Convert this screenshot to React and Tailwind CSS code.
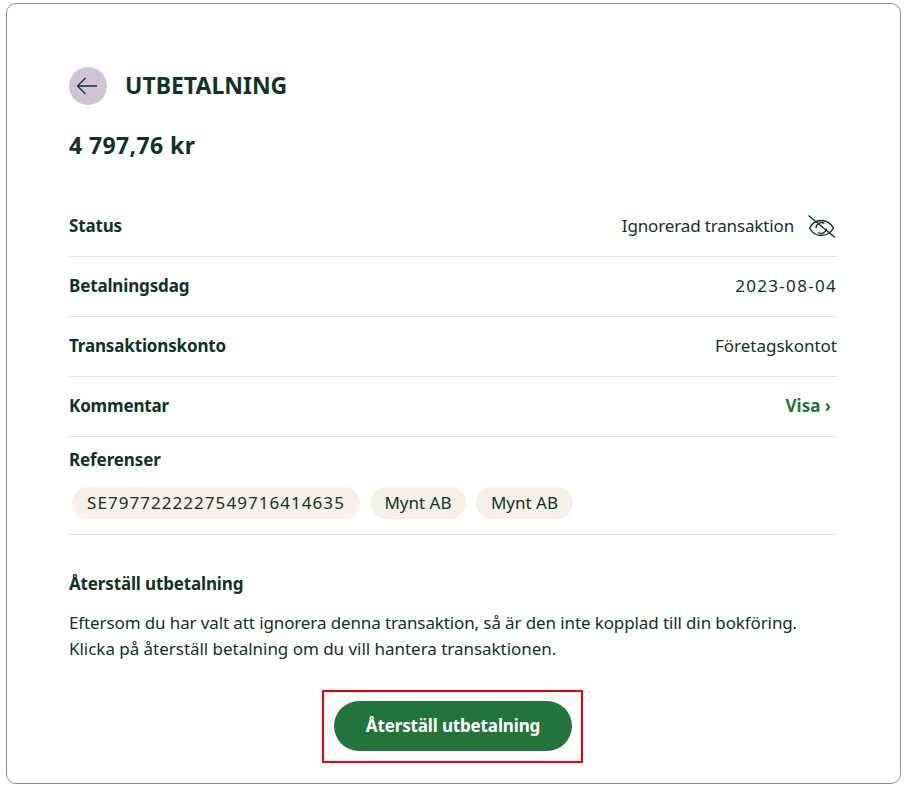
import React from "react";

const Row = ({ label, children }) => (
  <div className="flex h-[60px] items-center justify-between border-b border-[#e2e2e2] pb-[2px]">
    <span className="text-[17px] font-bold tracking-[-0.15px]">{label}</span>
    <div className="flex items-center text-[17px]">{children}</div>
  </div>
);

const Chip = ({ children, className = "" }) => (
  <span className={`flex h-8 items-center rounded-2xl bg-[#f6f0e9] text-[17px] ${className}`}>{children}</span>
);

export default function App() {
  return (
    <div className="h-[789px] bg-white pt-[3px] pl-[6px] font-['Noto_Sans',sans-serif] text-[#0f3327]">
      <div className="h-[781px] w-[895px] rounded-[10px] border border-[#8f8f8f] pr-[63px] pl-[62px] pt-[63px]">
        <div className="flex items-center gap-[18px]">
          <div className="flex h-[38px] w-[38px] items-center justify-center rounded-full bg-[#cfc3d5]">
            <svg className="-mt-px -ml-[3px]" width="24" height="24" viewBox="0 0 24 24" fill="none" stroke="#0f3327" strokeWidth="1.3">
              <path d="M22 12H2.500M10.500 4 2.500 12l8 8" />
            </svg>
          </div>
          <h1 className="mb-[2px] text-[23px] leading-[36px] font-bold">UTBETALNING</h1>
        </div>
        <div className="mt-[23px] text-[23px] leading-[34px] font-bold tracking-[0.4px]">4 797,76 kr</div>
        <div className="mt-[35px]">
          <Row label="Status">
            <span className="tracking-[-0.15px]">Ignorerad transaktion</span>
            <svg className="mt-[2px] mr-px ml-[14px]" width="28" height="26" viewBox="0 0 28 26" fill="none" stroke="#0f3327" strokeWidth="1.4">
              <path d="M1.500 14c2.500-4.500 6.500-7.500 11.500-7.500S23 9.500 25.500 14c-2.500 4.500-6.500 7.500-12.500 7.500S4 18.500 1.500 14Z" />
              <path d="M8 14a5.500 5.500 0 0 1 8.500-4.500M18.500 14.500a5.500 5.500 0 0 1-8.500 4" />
              <path d="M0.500 1.500 27 23.500" />
            </svg>
          </Row>
          <Row label="Betalningsdag">
            <span className="tracking-[1.3px]">2023-08-04</span>
          </Row>
          <Row label="Transaktionskonto">Företagskontot</Row>
          <Row label="Kommentar">
            <span className="mr-[6px] font-bold text-[#24733c]">Visa ›</span>
          </Row>
          <div className="border-b border-[#e2e2e2] pb-[15px]">
            <div className="pt-[10px] text-[17px] leading-[26px] font-bold tracking-[-0.1px]">Referenser</div>
            <div className="mt-[14px] flex gap-[10px] pl-[3px]">
              <Chip className="px-[15px] tracking-[1.05px]">SE7977222227549716414635</Chip>
              <Chip className="w-[96px] justify-center">Mynt AB</Chip>
              <Chip className="w-[97px] justify-center">Mynt AB</Chip>
            </div>
          </div>
        </div>
        <h2 className="mt-[36px] text-[17px] leading-[26px] font-bold tracking-[-0.15px]">Återställ utbetalning</h2>
        <p className="mt-[13px] text-[17px] leading-[26px]">
          <span className="tracking-[-0.115px]">
            Eftersom du har valt att ignorera denna transaktion, så är den inte kopplad till din bokföring.
          </span>
          <br />
          <span className="tracking-[-0.03px]">Klicka på återställ betalning om du vill hantera transaktionen.</span>
        </p>
        <div className="mt-[28px] flex justify-center pr-[1px]">
          <div className="border-2 border-[#f00000] pt-[9px] pr-[9px] pb-[10px] pl-[10px]">
            <button className="block h-[50px] w-[238px] rounded-[25px] bg-[#24733c] text-[17px] font-bold tracking-[-0.15px] text-white">
              Återställ utbetalning
            </button>
          </div>
        </div>
      </div>
    </div>
  );
}
